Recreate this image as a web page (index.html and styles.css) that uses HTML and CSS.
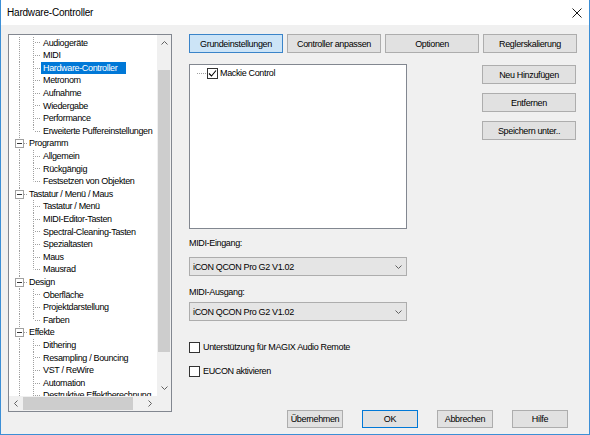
FILE: index.html
```html
<!DOCTYPE html>
<html>
<head>
<meta charset="utf-8">
<link rel="stylesheet" href="styles.css">
</head>
<body>
<div class="window">
  <div class="titlebar">
    <span class="title">Hardware-Controller</span>
    <span class="close"><svg width="10" height="10" viewBox="0 0 10 10"><path d="M0.5 0.5L9.5 9.5M9.5 0.5L0.5 9.5" stroke="#1a1a1a" stroke-width="1" fill="none"/></svg></span>
  </div>
  <div class="content">
    <div class="tree">
      <div class="tree-view">
        <div class="row child"><span class="branch"></span><span class="label">Audiogeräte</span></div>
        <div class="row child"><span class="branch"></span><span class="label">MIDI</span></div>
        <div class="row child"><span class="branch"></span><span class="label sel">Hardware-Controller</span></div>
        <div class="row child"><span class="branch"></span><span class="label">Metronom</span></div>
        <div class="row child"><span class="branch"></span><span class="label">Aufnahme</span></div>
        <div class="row child"><span class="branch"></span><span class="label">Wiedergabe</span></div>
        <div class="row child"><span class="branch"></span><span class="label">Performance</span></div>
        <div class="row child"><span class="branch last"></span><span class="label">Erweiterte Puffereinstellungen</span></div>
        <div class="row root"><span class="exp"></span><span class="conn"></span><span class="label">Programm</span></div>
        <div class="row child"><span class="branch"></span><span class="label">Allgemein</span></div>
        <div class="row child"><span class="branch"></span><span class="label">Rückgängig</span></div>
        <div class="row child"><span class="branch last"></span><span class="label">Festsetzen von Objekten</span></div>
        <div class="row root"><span class="exp"></span><span class="conn"></span><span class="label">Tastatur / Menü / Maus</span></div>
        <div class="row child"><span class="branch"></span><span class="label">Tastatur / Menü</span></div>
        <div class="row child"><span class="branch"></span><span class="label">MIDI-Editor-Tasten</span></div>
        <div class="row child"><span class="branch"></span><span class="label">Spectral-Cleaning-Tasten</span></div>
        <div class="row child"><span class="branch"></span><span class="label">Spezialtasten</span></div>
        <div class="row child"><span class="branch"></span><span class="label">Maus</span></div>
        <div class="row child"><span class="branch last"></span><span class="label">Mausrad</span></div>
        <div class="row root"><span class="exp"></span><span class="conn"></span><span class="label">Design</span></div>
        <div class="row child"><span class="branch"></span><span class="label">Oberfläche</span></div>
        <div class="row child"><span class="branch"></span><span class="label">Projektdarstellung</span></div>
        <div class="row child"><span class="branch last"></span><span class="label">Farben</span></div>
        <div class="row root"><span class="exp"></span><span class="conn"></span><span class="label">Effekte</span></div>
        <div class="row child"><span class="branch"></span><span class="label">Dithering</span></div>
        <div class="row child"><span class="branch"></span><span class="label">Resampling / Bouncing</span></div>
        <div class="row child"><span class="branch"></span><span class="label">VST / ReWire</span></div>
        <div class="row child"><span class="branch"></span><span class="label">Automation</span></div>
        <div class="row child"><span class="branch"></span><span class="label">Destruktive Effektberechnung</span></div>
      </div>
      <div class="vscroll">
        <div class="arrow-v"><svg width="7" height="4" viewBox="0 0 7 4"><path d="M0.5 3.5L3.5 0.5L6.5 3.5" fill="none" stroke="#606060"/></svg></div>
        <div class="vtrack"><div class="vthumb"></div></div>
        <div class="arrow-v"><svg width="7" height="4" viewBox="0 0 7 4"><path d="M0.5 0.5L3.5 3.5L6.5 0.5" fill="none" stroke="#606060"/></svg></div>
      </div>
      <div class="hscroll">
        <div class="arrow-h"><svg width="4" height="7" viewBox="0 0 4 7"><path d="M3.5 0.5L0.5 3.5L3.5 6.5" fill="none" stroke="#606060"/></svg></div>
        <div class="htrack"><div class="hthumb"></div></div>
        <div class="arrow-h"><svg width="4" height="7" viewBox="0 0 4 7"><path d="M0.5 0.5L3.5 3.5L0.5 6.5" fill="none" stroke="#606060"/></svg></div>
      </div>
      <div class="corner"></div>
    </div>

    <div class="panel">
      <div class="tabs">
        <div class="btn tab active">Grundeinstellungen</div>
        <div class="btn tab">Controller anpassen</div>
        <div class="btn tab">Optionen</div>
        <div class="btn tab">Reglerskalierung</div>
      </div>
      <div class="mid">
        <div class="listbox">
          <div class="list-item">
            <span class="list-conn"></span>
            <span class="cb checked"><svg width="9" height="9" viewBox="0 0 9 9"><path d="M1 4.5L3.5 7L8 1.5" fill="none" stroke="#000" stroke-width="1.1"/></svg></span>
            <span class="cb-text">Mackie Control</span>
          </div>
        </div>
        <div class="side">
          <div class="btn side-btn">Neu Hinzufügen</div>
          <div class="btn side-btn">Entfernen</div>
          <div class="btn side-btn">Speichern unter..</div>
        </div>
      </div>
      <div class="field-label first">MIDI-Eingang:</div>
      <div class="select first"><span>iCON QCON Pro G2 V1.02</span><svg width="7" height="4" viewBox="0 0 7 4"><path d="M0.5 0.5L3.5 3.5L6.5 0.5" fill="none" stroke="#606060"/></svg></div>
      <div class="field-label second">MIDI-Ausgang:</div>
      <div class="select second"><span>iCON QCON Pro G2 V1.02</span><svg width="7" height="4" viewBox="0 0 7 4"><path d="M0.5 0.5L3.5 3.5L6.5 0.5" fill="none" stroke="#606060"/></svg></div>
      <div class="check-row first"><span class="cb"></span><span class="cb-text">Unterstützung für MAGIX Audio Remote</span></div>
      <div class="check-row second"><span class="cb"></span><span class="cb-text">EUCON aktivieren</span></div>
      <div class="bottom">
        <div class="btn dlg">Übernehmen</div>
        <div class="btn dlg focus">OK</div>
        <div class="btn dlg">Abbrechen</div>
        <div class="btn dlg">Hilfe</div>
      </div>
    </div>
  </div>
</div>
</body>
</html>
```

FILE: styles.css
```css
* { box-sizing: border-box; }
html, body { margin: 0; padding: 0; }
body {
  width: 590px;
  height: 435px;
  overflow: hidden;
  background: #f0f0f0;
  font-family: "Liberation Sans", Arial, sans-serif;
  font-size: 9px;
  letter-spacing: -0.35px;
  color: #000;
}
.window {
  width: 590px;
  height: 435px;
  border: 1px solid #3c8fd6;
  border-top: none;
  background: #f0f0f0;
  display: flex;
  flex-direction: column;
}
.titlebar {
  height: 25px;
  flex: none;
  background: #fff;
  display: flex;
  align-items: center;
  justify-content: space-between;
  padding: 0 7px 0 6px;
}
.title { font-size: 10px; letter-spacing: -0.2px; }
.close { display: flex; width: 10px; height: 10px; }

.content {
  display: flex;
  gap: 17px;
  padding: 9px 0 0 7px;
  flex: 1;
}

/* tree */
.tree {
  width: 164px;
  height: 378px;
  border: 1px solid #828790;
  background: #fff;
  display: grid;
  grid-template-columns: 148px 14px;
  grid-template-rows: 361px 15px;
}
.tree-view {
  overflow: hidden;
  padding-top: 1.7px;
}
.row {
  height: 12.6px;
  display: flex;
  align-items: center;
  white-space: nowrap;
  background: repeating-linear-gradient(to bottom, #a0a0a0 0 1px, transparent 1px 2px) 10px 0 / 1px 100% no-repeat;
}
.row.child { padding-left: 24px; }
.row.root { padding-left: 6px; }
.exp {
  flex: none;
  width: 9px;
  height: 9px;
  border: 1px solid #a0a0a0;
  background: #fff;
  display: flex;
  align-items: center;
  justify-content: center;
}
.exp::before {
  content: "";
  width: 5px;
  height: 1px;
  background: #333;
}
.conn {
  flex: none;
  width: 3px;
  height: 100%;
  background: repeating-linear-gradient(to right, #a0a0a0 0 1px, transparent 1px 2px) 0 50% / 100% 1px no-repeat;
}
.branch {
  flex: none;
  width: 8px;
  height: 100%;
  background:
    repeating-linear-gradient(to bottom, #a0a0a0 0 1px, transparent 1px 2px) 0 0 / 1px 100% no-repeat,
    repeating-linear-gradient(to right, #a0a0a0 0 1px, transparent 1px 2px) 2px 50% / 6px 1px no-repeat;
}
.branch.last {
  background-size: 1px 50%, 6px 1px;
}
.label {
  padding: 0 2px;
  line-height: 12.6px;
}
.label.sel { background: #0078d7; color: #fff; padding-right: 9px; }

.vscroll {
  background: #f0f0f0;
  display: flex;
  flex-direction: column;
}
.arrow-v {
  flex: none;
  height: 16px;
  display: flex;
  align-items: center;
  justify-content: center;
}
.vtrack { flex: 1; padding: 0 1px; }
.vthumb { margin-top: 19px; height: 282px; background: #cdcdcd; }

.hscroll {
  background: #f0f0f0;
  display: flex;
}
.arrow-h {
  flex: none;
  width: 14px;
  display: flex;
  align-items: center;
  justify-content: center;
}
.htrack { flex: 1; padding: 1px 0; }
.hthumb { width: 110px; height: 100%; background: #cdcdcd; }
.corner { background: #f0f0f0; }

/* panel */
.panel {
  width: 388px;
  display: flex;
  flex-direction: column;
}
.btn {
  border: 1px solid #adadad;
  background: #e1e1e1;
  display: flex;
  align-items: center;
  justify-content: center;
  white-space: nowrap;
}
.tabs { display: flex; gap: 4px; }
.tab { width: 94px; height: 19px; }
.tab.active { background: #cce4f7; border-color: #3a84c9; }

.mid { display: flex; margin-top: 11px; }
.listbox {
  width: 218px;
  height: 165px;
  background: #fff;
  border: 1px solid #828790;
  padding: 2px 0 0 7px;
}
.list-item {
  display: flex;
  align-items: center;
  height: 12px;
}
.list-conn {
  width: 10px;
  height: 1px;
  background: repeating-linear-gradient(to right, #a0a0a0 0 1px, transparent 1px 2px);
}
.cb {
  flex: none;
  width: 11px;
  height: 11px;
  border: 1px solid #333;
  background: #fff;
  display: flex;
  align-items: center;
  justify-content: center;
}
.cb-text { margin-left: 2px; white-space: nowrap; }

.side {
  margin-left: 75px;
  padding-top: 1px;
  display: flex;
  flex-direction: column;
  gap: 9px;
}
.side-btn { width: 94px; height: 19px; }

.field-label { height: 12px; line-height: 12px; }
.field-label.first { margin-top: 8px; }
.field-label.second { margin-top: 10px; }
.select {
  width: 218px;
  height: 19px;
  border: 1px solid #adadad;
  background: #e5e5e5;
  display: flex;
  align-items: center;
  justify-content: space-between;
  padding: 0 4px 0 3px;
}
.select.first { margin-top: 8px; }
.select.second { margin-top: 4px; }

.check-row {
  display: flex;
  align-items: center;
  height: 12px;
}
.check-row .cb-text { margin-left: 3px; }
.check-row.first { margin-top: 20px; }
.check-row.second { margin-top: 12px; }

.bottom {
  display: flex;
  gap: 19px;
  margin-top: 33px;
  padding-left: 98px;
}
.dlg { width: 56px; height: 18px; }
.dlg.focus { border-color: #0078d7; }
```
